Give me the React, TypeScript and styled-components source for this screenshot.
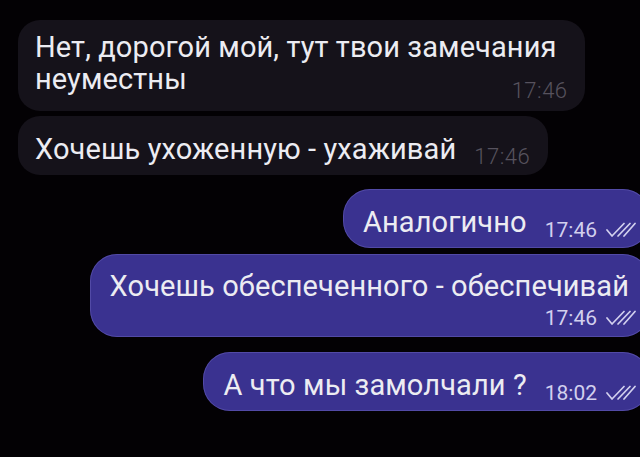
import React from "react";
import styled, { createGlobalStyle, css } from "styled-components";

const GlobalStyle = createGlobalStyle`
  html, body {
    margin: 0;
    height: 100%;
    overflow: hidden;
    background: #030104;
  }
  body {
    font-family: Roboto, "Noto Sans", "Liberation Sans", sans-serif;
    color: #ececf2;
  }
`;

type Layout = "side" | "under" | "overlay";

const Chat = styled.div`
  display: flex;
  flex-direction: column;
  align-items: flex-start;
  padding: 20px 0 0 18px;
`;

const Bubble = styled.div<{ $out?: boolean; $layout: Layout; $space: number }>`
  display: grid;
  margin-top: ${(p) => p.$space}px;
  background: ${(p) => (p.$out ? "#3a3290" : "#15121a")};
  border-radius: ${(p) => (p.$out ? "27px" : "22px")};
  ${(p) =>
    p.$out &&
    css`
      align-self: flex-end;
      margin-right: -10px;
      box-shadow: inset 0 0 0 1px rgba(130, 120, 210, 0.35);
    `}

  ${(p) =>
    p.$layout === "side" &&
    css`
      grid-template-columns: auto auto;
      align-items: end;
      column-gap: ${p.$out ? "18px" : "18px"};
      padding: 17px ${p.$out ? "14px" : "18px"} 10px ${p.$out ? "20px" : "17px"};
    `}

  ${(p) =>
    p.$layout === "under" &&
    css`
      row-gap: 8px;
      padding: 16px 14px 11px 20px;
    `}

  ${(p) =>
    p.$layout === "overlay" &&
    css`
      grid-template-areas: "stack";
      padding: 11px 17px 12px 17px;
      & > * {
        grid-area: stack;
      }
    `}
`;

const Text = styled.div<{ $layout: Layout }>`
  font-size: 29px;
  line-height: 32px;
  letter-spacing: 0.1px;
  white-space: nowrap;
  ${(p) =>
    p.$layout === "overlay" &&
    css`
      padding: 0 11px 4px 0;
    `}
  ${(p) =>
    p.$layout === "under" &&
    css`
      padding-right: 7px;
    `}
`;

const Meta = styled.div<{ $out?: boolean }>`
  display: flex;
  align-items: baseline;
  justify-self: end;
  align-self: end;
  gap: 8px;
  line-height: 16px;
  ${(p) =>
    p.$out
      ? css`
          font-size: 21px;
          font-weight: 400;
          color: #d2d0ee;
        `
      : css`
          font-size: 22px;
          font-weight: 300;
          letter-spacing: 0.5px;
          color: #57525e;
        `}
`;

const Checks = styled.svg`
  width: 31px;
  height: 15px;
  flex: none;
`;

function DoubleCheck() {
  return (
    <Checks viewBox="0 0 31 15" fill="none" stroke="#d2d0ee" strokeWidth="1.7" strokeLinecap="round" strokeLinejoin="round">
      <polyline points="2,8 7,14 19,1.5" />
      <line x1="13" y1="14" x2="25" y2="1.5" />
      <line x1="19" y1="14" x2="30" y2="1.5" />
    </Checks>
  );
}

type Message = {
  text: React.ReactNode;
  time: string;
  out?: boolean;
  layout: Layout;
  space: number;
};

const messages: Message[] = [
  {
    text: (
      <>
        Нет, дорогой мой, тут твои замечания
        <br />
        неуместны
      </>
    ),
    time: "17:46",
    layout: "overlay",
    space: 0,
  },
  { text: "Хочешь ухоженную - ухаживай", time: "17:46", layout: "side", space: 5 },
  { text: "Аналогично", time: "17:46", out: true, layout: "side", space: 14 },
  { text: "Хочешь обеспеченного - обеспечивай", time: "17:46", out: true, layout: "under", space: 6 },
  { text: "А что мы замолчали ?", time: "18:02", out: true, layout: "side", space: 15 },
];

export default function App() {
  return (
    <>
      <GlobalStyle />
      <Chat>
        {messages.map((m, i) => (
          <Bubble key={i} $out={m.out} $layout={m.layout} $space={m.space}>
            <Text $layout={m.layout}>{m.text}</Text>
            <Meta $out={m.out}>
              <span>{m.time}</span>
              {m.out && <DoubleCheck />}
            </Meta>
          </Bubble>
        ))}
      </Chat>
    </>
  );
}
